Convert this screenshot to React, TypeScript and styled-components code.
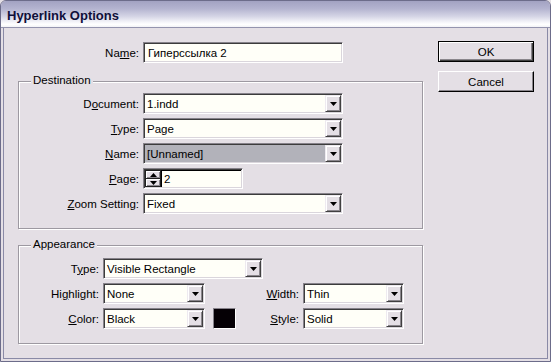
import React from "react";
import styled, { createGlobalStyle } from "styled-components";

const BG = "#e4dfe5";

const Global = createGlobalStyle`
  html, body { margin: 0; padding: 0; background: ${BG}; }
  body {
    font-family: "Liberation Sans", Arial, sans-serif;
    font-size: 11.5px;
    color: #000;
  }
  * { box-sizing: border-box; }
`;

const Window = styled.div`
  width: 551px;
  height: 362px;
  border: 1px solid #6c6c8a;
  border-radius: 6px 6px 0 0;
  background: ${BG};
  display: flex;
  flex-direction: column;
  overflow: hidden;
`;

const TitleBar = styled.div`
  flex: none;
  height: 27px;
  border-bottom: 1px solid #9494ae;
  background: linear-gradient(
    to bottom,
    #a2a2c2 0%,
    #b4b4d0 30%,
    #d6d6e6 60%,
    #f6f6fa 82%,
    #ffffff 90%,
    #f2f2f6 100%
  );
  display: flex;
  align-items: center;
  padding: 2px 0 0 6px;
  font: bold 13px "Liberation Sans", Arial, sans-serif;
  color: #10103a;
`;

const Body = styled.div`
  flex: 1;
  margin: 0 2px 2px;
  border: 1px solid #8a8aa6;
  border-top: none;
  display: flex;
  gap: 15px;
  padding: 14px 0 0 14px;
`;

const Main = styled.div`
  width: 405px;
  display: flex;
  flex-direction: column;
`;

const NameRow = styled.div`
  display: grid;
  grid-template-columns: 121px 200px;
  column-gap: 4px;
  height: 21px;
`;

const Label = styled.span<{ $pad?: number }>`
  align-self: center;
  justify-self: stretch;
  text-align: right;
  white-space: nowrap;
  padding-right: ${(p) => p.$pad ?? 0}px;
`;

const Key = styled.span`
  text-decoration: underline;
  text-underline-offset: 1px;
`;

const Group = styled.div<{ $top: number }>`
  position: relative;
  margin-top: ${(p) => p.$top}px;
  border: 1px solid #9d99a1;
  box-shadow: inset 1px 1px 0 #ffffff, 1px 1px 0 #ffffff;
`;

const Legend = styled.span`
  position: absolute;
  top: -9px;
  left: 12px;
  padding: 0 2px;
  background: ${BG};
  line-height: 14px;
`;

const DestGrid = styled.div`
  display: grid;
  grid-template-columns: 120px auto;
  grid-auto-rows: 21px;
  column-gap: 4px;
  row-gap: 4px;
  padding: 11px 0 14px;
  justify-items: start;
`;

const AppGrid = styled.div`
  display: grid;
  grid-template-columns: 84px 110px 23px 67px 101px;
  grid-auto-rows: 21px;
  row-gap: 4px;
  padding: 12px 0 14px;
  justify-items: start;
`;

const sunken = `
  border: 1px solid;
  border-color: #86828a #ffffff #ffffff #86828a;
  box-shadow: inset 1px 1px 0 #3c3c3c, inset -1px -1px 0 #dad6dc;
  padding: 1px;
`;

const TextBox = styled.div<{ $w: number }>`
  ${sunken}
  width: ${(p) => p.$w}px;
  height: 21px;
  background: #fffff8;
  display: flex;
  align-items: center;
  padding-left: 4px;
  white-space: nowrap;
`;

const SelectBox = styled.div<{ $w: number; $disabled?: boolean; $span?: string }>`
  ${sunken}
  width: ${(p) => p.$w}px;
  height: 21px;
  background: ${(p) => (p.$disabled ? "#b2b2ba" : "#fffff8")};
  display: flex;
  align-items: stretch;
  grid-column: ${(p) => p.$span ?? "auto"};
`;

const SelectText = styled.span`
  flex: 1;
  display: flex;
  align-items: center;
  padding-left: 2px;
  white-space: nowrap;
  overflow: hidden;
`;

const DropButton = styled.span`
  flex: none;
  width: 16px;
  display: flex;
  align-items: center;
  justify-content: center;
  background: ${BG};
  border: 1px solid;
  border-color: #eeeaf0 #404040 #404040 #eeeaf0;
  box-shadow: inset 1px 1px 0 #ffffff, inset -1px -1px 0 #8a868c;
`;

const Arrow = ({ up }: { up?: boolean }) => (
  <svg width="7" height="4" viewBox="0 0 7 4" style={{ display: "block" }}>
    <path d={up ? "M0 4h7L3.5 0z" : "M0 0h7L3.5 4z"} fill="#000" />
  </svg>
);

const SpinBox = styled.div`
  ${sunken}
  width: 100px;
  height: 21px;
  background: #fffff8;
  display: flex;
`;

const SpinButtons = styled.div`
  width: 16px;
  display: flex;
  flex-direction: column;
`;

const SpinBtn = styled.span`
  flex: 1;
  display: flex;
  align-items: center;
  justify-content: center;
  background: ${BG};
  border: 1px solid #202020;
  box-shadow: inset 1px 1px 0 #ffffff, inset -1px -1px 0 #8a868c;
  & + & { border-top: none; }
`;

const SpinValue = styled.span`
  flex: 1;
  display: flex;
  align-items: center;
  padding-left: 2px;
  border-top: 1px solid #000;
  border-left: 1px solid #000;
`;

const Swatch = styled.div`
  width: 23px;
  height: 21px;
  border: 1px solid;
  border-color: #86828a #ffffff #ffffff #86828a;
  background: #050005;
`;

const Buttons = styled.div`
  display: flex;
  flex-direction: column;
  gap: 9px;
  margin-top: -1px;
`;

const Button = styled.button<{ $default?: boolean }>`
  width: 96px;
  height: 21px;
  font: inherit;
  color: #000;
  background: ${BG};
  padding: 0;
  border: 1px solid ${(p) => (p.$default ? "#000" : "#ffffff")};
  border-right-color: #000;
  border-bottom-color: #000;
  box-shadow: ${(p) =>
    p.$default
      ? "inset 1px 1px 0 #ffffff, inset -1px -1px 0 #404040, inset -2px -2px 0 #8a868c"
      : "inset -1px -1px 0 #8a868c"};
`;

const Select = ({
  w,
  text,
  disabled,
  span,
}: {
  w: number;
  text: string;
  disabled?: boolean;
  span?: string;
}) => (
  <SelectBox $w={w} $disabled={disabled} $span={span}>
    <SelectText>{text}</SelectText>
    <DropButton>
      <Arrow />
    </DropButton>
  </SelectBox>
);

export default function App() {
  return (
    <>
      <Global />
      <Window>
        <TitleBar>Hyperlink Options</TitleBar>
        <Body>
          <Main>
            <NameRow>
              <Label>
                Na<Key>m</Key>e:
              </Label>
              <TextBox $w={200}>Гиперссылка 2</TextBox>
            </NameRow>

            <Group $top={18}>
              <Legend>Destination</Legend>
              <DestGrid>
                <Label>
                  D<Key>o</Key>cument:
                </Label>
                <Select w={200} text="1.indd" />
                <Label>
                  <Key>T</Key>ype:
                </Label>
                <Select w={200} text="Page" />
                <Label>
                  <Key>N</Key>ame:
                </Label>
                <Select w={200} text="[Unnamed]" disabled />
                <Label>
                  <Key>P</Key>age:
                </Label>
                <SpinBox>
                  <SpinButtons>
                    <SpinBtn>
                      <Arrow up />
                    </SpinBtn>
                    <SpinBtn>
                      <Arrow />
                    </SpinBtn>
                  </SpinButtons>
                  <SpinValue>2</SpinValue>
                </SpinBox>
                <Label>
                  <Key>Z</Key>oom Setting:
                </Label>
                <Select w={200} text="Fixed" />
              </DestGrid>
            </Group>

            <Group $top={16}>
              <Legend>Appearance</Legend>
              <AppGrid>
                <Label $pad={4}>
                  T<Key>y</Key>pe:
                </Label>
                <Select w={160} text="Visible Rectangle" span="2 / span 4" />

                <Label $pad={4}>
                  Hi<Key>g</Key>hlight:
                </Label>
                <Select w={102} text="None" />
                <span />
                <Label $pad={4}>
                  <Key>W</Key>idth:
                </Label>
                <Select w={101} text="Thin" />

                <Label $pad={4}>
                  <Key>C</Key>olor:
                </Label>
                <Select w={102} text="Black" />
                <Swatch />
                <Label $pad={4}>
                  <Key>S</Key>tyle:
                </Label>
                <Select w={101} text="Solid" />
              </AppGrid>
            </Group>
          </Main>
          <Buttons>
            <Button $default>OK</Button>
            <Button>Cancel</Button>
          </Buttons>
        </Body>
      </Window>
    </>
  );
}
